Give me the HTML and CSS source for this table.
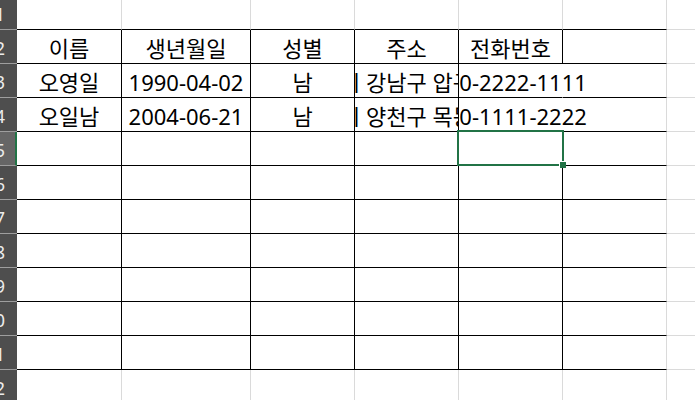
FILE: index.html
```html
<!DOCTYPE html>
<html lang="ko">
<head>
<meta charset="utf-8">
<title>Sheet</title>
<link rel="stylesheet" href="styles.css">
</head>
<body>
<div class="sheet">
  <!-- row 1 -->
  <div class="rh"><span>1</span></div>
  <div class="c b"></div><div class="c b"></div><div class="c b"></div><div class="c b"></div><div class="c b"></div><div class="c b"></div><div class="c last"></div>
  <!-- row 2 -->
  <div class="rh"><span>2</span></div>
  <div class="c b r">이름</div><div class="c b r">생년월일</div><div class="c b r">성별</div><div class="c b r">주소</div><div class="c b r">전화번호</div><div class="c b"></div><div class="c last"></div>
  <!-- row 3 -->
  <div class="rh"><span>3</span></div>
  <div class="c b r">오영일</div><div class="c b r">1990-04-02</div><div class="c b r">남</div><div class="c b r">서울시 강남구 압구정동</div><div class="c b nr spill">010-2222-1111</div><div class="c b"></div><div class="c last"></div>
  <!-- row 4 -->
  <div class="rh"><span>4</span></div>
  <div class="c b r">오일남</div><div class="c b r">2004-06-21</div><div class="c b r">남</div><div class="c b r">서울시 양천구 목동서로</div><div class="c b nr spill">010-1111-2222</div><div class="c b"></div><div class="c last"></div>
  <!-- row 5 -->
  <div class="rh sel"><span>5</span></div>
  <div class="c b r"></div><div class="c b r"></div><div class="c b r"></div><div class="c b r"></div><div class="c b r active"><div class="cursor"><div class="handle"></div></div></div><div class="c b"></div><div class="c last"></div>
  <!-- row 6 -->
  <div class="rh"><span>6</span></div>
  <div class="c b r"></div><div class="c b r"></div><div class="c b r"></div><div class="c b r"></div><div class="c b r"></div><div class="c b"></div><div class="c last"></div>
  <!-- row 7 -->
  <div class="rh"><span>7</span></div>
  <div class="c b r"></div><div class="c b r"></div><div class="c b r"></div><div class="c b r"></div><div class="c b r"></div><div class="c b"></div><div class="c last"></div>
  <!-- row 8 -->
  <div class="rh"><span>8</span></div>
  <div class="c b r"></div><div class="c b r"></div><div class="c b r"></div><div class="c b r"></div><div class="c b r"></div><div class="c b"></div><div class="c last"></div>
  <!-- row 9 -->
  <div class="rh"><span>9</span></div>
  <div class="c b r"></div><div class="c b r"></div><div class="c b r"></div><div class="c b r"></div><div class="c b r"></div><div class="c b"></div><div class="c last"></div>
  <!-- row 10 -->
  <div class="rh"><span>10</span></div>
  <div class="c b r"></div><div class="c b r"></div><div class="c b r"></div><div class="c b r"></div><div class="c b r"></div><div class="c b"></div><div class="c last"></div>
  <!-- row 11 -->
  <div class="rh"><span>11</span></div>
  <div class="c b r"></div><div class="c b r"></div><div class="c b r"></div><div class="c b r"></div><div class="c b r"></div><div class="c b"></div><div class="c last"></div>
  <!-- row 12 -->
  <div class="rh"><span>12</span></div>
  <div class="c"></div><div class="c"></div><div class="c"></div><div class="c"></div><div class="c"></div><div class="c"></div><div class="c last"></div>
</div>
</body>
</html>
```

FILE: styles.css
```css
html, body {
  margin: 0;
  padding: 0;
  background: #ffffff;
  overflow: hidden;
}

.sheet {
  display: grid;
  grid-template-columns: 17px 105px 129px 104px 104px 104px 104px 1fr;
  grid-auto-rows: 34px;
  margin-top: -4px;
  font-family: "Noto Sans", "Noto Sans CJK KR", sans-serif;
  font-size: 22px;
  color: #000000;
}

.rh {
  box-sizing: border-box;
  background: #4e4e4e;
  border-bottom: 1px solid #9e9e9e;
  overflow: hidden;
  display: flex;
  justify-content: flex-end;
  align-items: center;
  padding-right: 12px;
  padding-top: 2px;
  font-size: 18px;
  color: #ececec;
  white-space: nowrap;
}

.rh.sel {
  background: #666666;
  border-right: 2px solid #217346;
  padding-right: 10px;
}

.c {
  box-sizing: border-box;
  border-right: 1px solid #dadada;
  border-bottom: 1px solid #dadada;
  display: flex;
  justify-content: center;
  align-items: flex-end;
  padding-bottom: 4px;
  line-height: 22px;
  white-space: nowrap;
  overflow: hidden;
}

.c.last {
  border-right: none;
}

.c.b {
  border-bottom-color: #000000;
}

.c.r {
  border-right-color: #000000;
}

.c.nr {
  border-right-color: transparent;
}

.c.spill {
  overflow: visible;
  clip-path: inset(-4px -300px -4px 0);
}

.c.active {
  position: relative;
  overflow: visible;
}

.cursor {
  position: absolute;
  top: -2px;
  left: -2px;
  right: -2px;
  bottom: -1px;
  border: 2px solid #217346;
}

.handle {
  position: absolute;
  right: -4px;
  bottom: -4px;
  width: 6px;
  height: 6px;
  background: #217346;
  border: 1px solid #ffffff;
  border-right: none;
  border-bottom: none;
}
```
